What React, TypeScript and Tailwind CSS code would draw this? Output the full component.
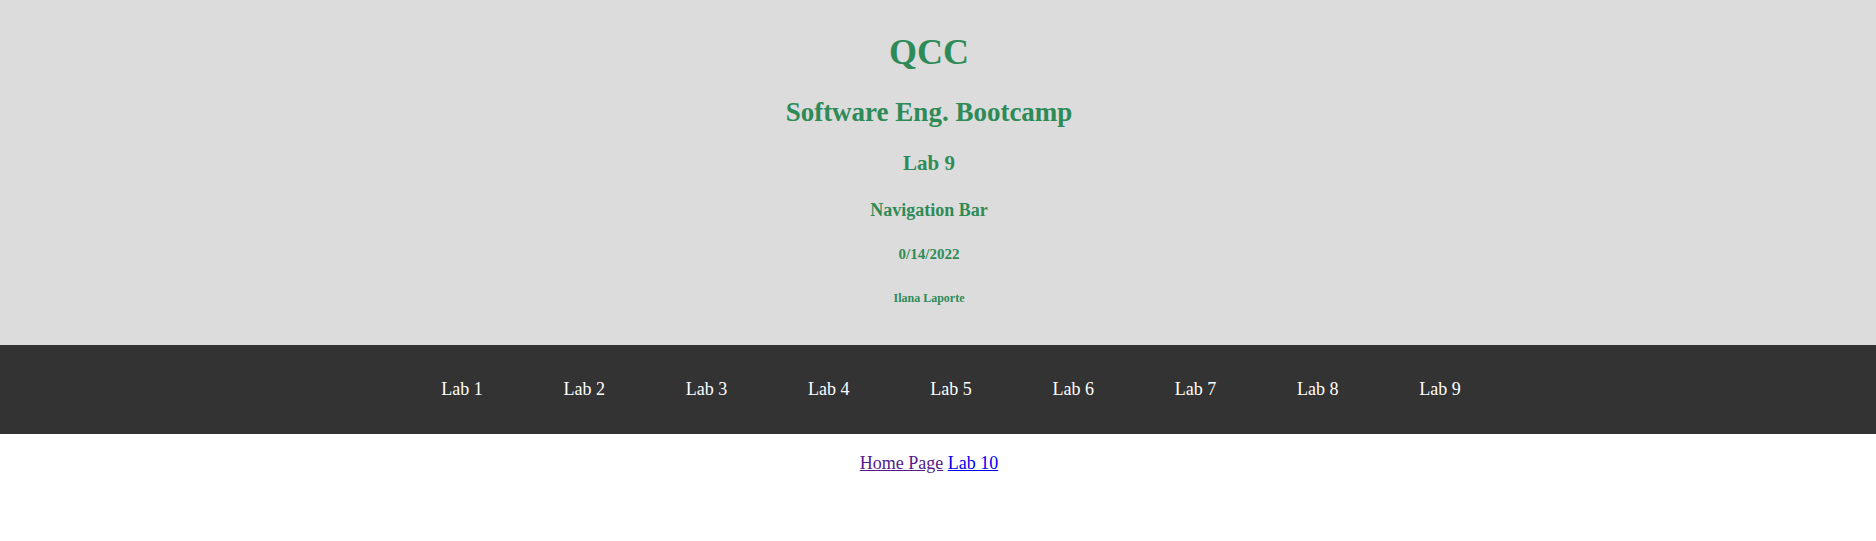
const labs = ["Lab 1", "Lab 2", "Lab 3", "Lab 4", "Lab 5", "Lab 6", "Lab 7", "Lab 8", "Lab 9"];

export default function App() {
  return (
    <div className="min-h-screen bg-white font-['Liberation_Serif','Times_New_Roman',serif]">
      <header className="bg-[#dcdcdc] pr-[18px] pt-[34px] pb-[41px] text-center font-bold text-[#2e8b57]">
        <h1 className="text-[36px] leading-none">QCC</h1>
        <h2 className="mt-[29px] text-[27px] leading-none">Software Eng. Bootcamp</h2>
        <h3 className="mt-[27px] text-[21px] leading-none">Lab 9</h3>
        <h4 className="mt-[27px] text-[18px] leading-none">Navigation Bar</h4>
        <h5 className="mt-[28px] text-[15px] leading-none">0/14/2022</h5>
        <h6 className="mt-[30px] text-[12px] leading-none">Ilana Laporte</h6>
      </header>

      <nav className="bg-[#333333] pr-[18px]">
        <ul className="flex justify-center pl-[44px]">
          {labs.map((lab) => (
            <li key={lab}>
              <a href="#" className="block px-[40.4px] pt-[34.5px] pb-[36.5px] text-[18px] leading-none text-white">
                {lab}
              </a>
            </li>
          ))}
        </ul>
      </nav>

      <div className="mt-[19.5px] pr-[18px] text-center text-[18px] leading-none">
        <a href="#" className="text-[#551a8b] underline">Home Page</a>{" "}
        <a href="#" className="text-[#0000ee] underline">Lab 10</a>
      </div>
    </div>
  );
}
